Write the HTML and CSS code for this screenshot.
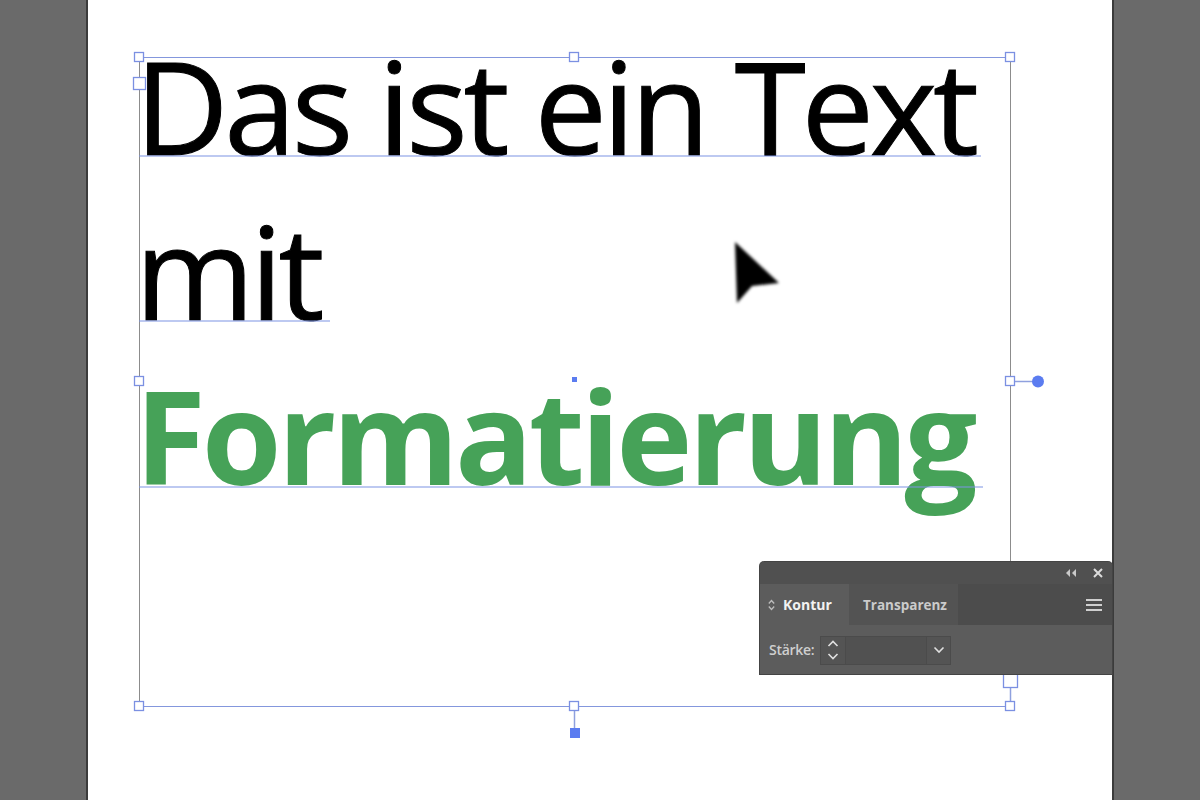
FILE: index.html
```html
<!DOCTYPE html>
<html lang="de">
<head>
<meta charset="utf-8">
<title>Textrahmen</title>
<link rel="stylesheet" href="styles.css">
</head>
<body>
<div class="workspace">
  <div class="artboard">
    <div class="frame">
      <div class="text">
        <div class="line">Das ist ein Text</div>
        <div class="line">mit</div>
        <div class="line green">Formatierung</div>
      </div>
    </div>
  </div>
</div>

<svg class="selection" width="1200" height="800" viewBox="0 0 1200 800">
  <g class="baseline">
    <line x1="139" y1="156" x2="981" y2="156"/>
    <line x1="139" y1="321" x2="330" y2="321"/>
    <line x1="139" y1="487" x2="983" y2="487"/>
  </g>
  <g class="conn">
    <line x1="1015" y1="381.5" x2="1033" y2="381.5"/>
    <line x1="574.5" y1="711" x2="574.5" y2="729"/>
    <line x1="1010.5" y1="672" x2="1010.5" y2="701"/>
  </g>
  <g class="handle">
    <rect x="134.5" y="52.5" width="9" height="9"/>
    <rect x="569.5" y="52.5" width="9" height="9"/>
    <rect x="1005.5" y="52.5" width="9" height="9"/>
    <rect x="133.5" y="77.5" width="12" height="12"/>
    <rect x="134.5" y="376.5" width="9" height="9"/>
    <rect x="1005.5" y="376.5" width="9" height="9"/>
    <rect x="134.5" y="701.5" width="9" height="9"/>
    <rect x="569.5" y="701.5" width="9" height="9"/>
    <rect x="1005.5" y="701.5" width="9" height="9"/>
    <rect x="1003.5" y="670.5" width="14" height="17"/>
  </g>
  <circle class="dot" cx="1038" cy="381.5" r="6"/>
  <rect class="dot" x="570" y="728" width="10" height="10"/>
  <rect class="dot" x="572" y="377" width="5" height="5"/>
</svg>

<div class="panel">
  <div class="panel-head">
    <svg class="ico-collapse" width="12" height="8" viewBox="0 0 12 8"><polygon points="5,0 5,8 1,4"/><polygon points="11,0 11,8 7,4"/></svg>
    <svg class="ico-close" width="10" height="10" viewBox="0 0 10 10"><path d="M1 1 L9 9 M9 1 L1 9"/></svg>
  </div>
  <div class="tabs">
    <div class="tab active">
      <svg class="ico-updown" width="7" height="12" viewBox="0 0 7 12"><path d="M0.8 4.5 L3.5 1.5 L6.2 4.5 M0.8 7.5 L3.5 10.5 L6.2 7.5"/></svg>
      <span>Kontur</span>
    </div>
    <div class="tab">Transparenz</div>
    <div class="tab-fill"></div>
    <div class="menu"><span></span><span></span><span></span></div>
  </div>
  <div class="panel-body">
    <span class="label">Stärke:</span>
    <div class="field">
      <div class="spin">
        <svg width="12" height="24" viewBox="0 0 12 24"><path d="M1.5 8 L6 3.5 L10.5 8 M1.5 16 L6 20.5 L10.5 16"/></svg>
      </div>
      <div class="input"></div>
      <div class="drop">
        <svg width="12" height="8" viewBox="0 0 12 8"><path d="M1.5 1.5 L6 6 L10.5 1.5"/></svg>
      </div>
    </div>
  </div>
</div>

<svg class="cursor" width="60" height="70" viewBox="0 0 60 70">
  <defs><filter id="blur" x="-30%" y="-30%" width="160%" height="160%"><feGaussianBlur stdDeviation="1.4"/></filter></defs>
  <polygon points="5,5 49,46 22,49 7,66" filter="url(#blur)"/>
</svg>
</body>
</html>
```

FILE: styles.css
```css
html, body {
  margin: 0;
  padding: 0;
}
body {
  width: 1200px;
  height: 800px;
  overflow: hidden;
  background: #6a6a6a;
  position: relative;
  font-family: "Open Sans", "DejaVu Sans", sans-serif;
}
.workspace {
  height: 800px;
  display: flex;
}
.artboard {
  margin-left: 86px;
  width: 1024px;
  height: 800px;
  background: #ffffff;
  border-left: 2px solid #3b3b3b;
  border-right: 2px solid #3b3b3b;
}
.frame {
  margin: 57px 0 0 51px;
  width: 870px;
  height: 648px;
  border-style: solid;
  border-width: 1px;
  border-color: #8497dd #8c8c8c #8497dd #8c8c8c;
}
.text {
  margin: -35px 0 0 -5px;
  font-size: 129px;
  line-height: 165px;
  letter-spacing: -4.3px;
  color: #000;
  -webkit-text-stroke: 1px #000;
  white-space: nowrap;
}
.line {
  height: 165px;
}
.green {
  color: #46a258;
  -webkit-text-stroke: 0;
  font-weight: 700;
  letter-spacing: -4px;
}

.selection {
  position: absolute;
  left: 0;
  top: 0;
  pointer-events: none;
}
.baseline line {
  stroke: #7d93e4;
  stroke-width: 1.2;
}
.conn line {
  stroke: #8fa0de;
  stroke-width: 1.5;
}
.handle rect {
  fill: #ffffff;
  stroke: #7b90e2;
  stroke-width: 1.3;
}
.dot {
  fill: #5b7cf0;
}

.panel {
  position: absolute;
  left: 760px;
  top: 562px;
  width: 352px;
  height: 112px;
  background: #5c5c5c;
  border-radius: 4px 4px 0 0;
  box-shadow: 0 0 0 1px #444;
  display: flex;
  flex-direction: column;
  font-family: "Open Sans", "DejaVu Sans", sans-serif;
}
.panel-head {
  height: 22px;
  background: #505050;
  border-radius: 4px 4px 0 0;
  display: flex;
  align-items: center;
  justify-content: flex-end;
  gap: 16px;
  padding-right: 9px;
}
.ico-collapse polygon {
  fill: #c9c9c9;
}
.ico-close path {
  stroke: #dcdcdc;
  stroke-width: 2;
}
.tabs {
  height: 41px;
  display: flex;
  background: #4a4a4a;
}
.tab {
  display: flex;
  align-items: center;
  padding: 0 11px 0 14px;
  font-size: 13.5px;
  font-weight: 700;
  color: #cbcbcb;
  background: #535353;
  width: 109px;
  box-sizing: border-box;
}
.tab.active {
  width: 89px;
  padding-left: 8px;
  gap: 8px;
  background: #5c5c5c;
  color: #f2f2f2;
}
.tab.active span {
  font-size: 14px;
}
.ico-updown path {
  fill: none;
  stroke: #bdbdbd;
  stroke-width: 1.3;
}
.tab-fill {
  flex: 1;
  background: #4c4c4c;
}
.menu {
  width: 34px;
  background: #4c4c4c;
  display: flex;
  flex-direction: column;
  justify-content: center;
  gap: 3px;
  padding: 0 10px 0 8px;
  box-sizing: border-box;
}
.menu span {
  display: block;
  height: 2px;
  background: #cfcfcf;
}
.panel-body {
  flex: 1;
  display: flex;
  align-items: center;
  padding: 0 0 0 9px;
  gap: 6px;
}
.label {
  font-size: 14px;
  font-weight: 600;
  color: #cfcfcf;
  letter-spacing: -0.3px;
}
.field {
  display: flex;
  height: 29px;
  margin-top: 1px;
}
.spin, .input, .drop {
  background: #545454;
  border: 1px solid #4b4b4b;
  box-sizing: border-box;
  display: flex;
  align-items: center;
  justify-content: center;
}
.spin { width: 26px; }
.input { width: 80px; border-left: none; border-right: none; background: #515151; }
.drop { width: 25px; }
.spin path, .drop path {
  fill: none;
  stroke: #e0e0e0;
  stroke-width: 1.6;
}

.cursor {
  position: absolute;
  left: 730px;
  top: 237px;
  pointer-events: none;
}
.cursor polygon {
  fill: #000;
}
```
